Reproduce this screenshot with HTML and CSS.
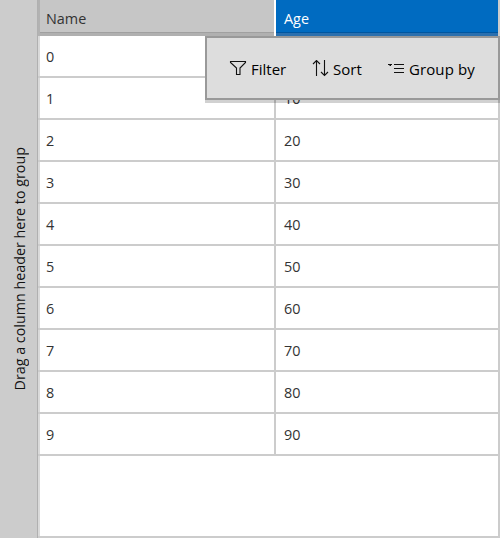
FILE: index.html
```html
<!DOCTYPE html>
<html lang="en">
<head>
<meta charset="utf-8">
<title>Data grid</title>
<link rel="stylesheet" href="styles.css">
</head>
<body>
<div class="app">
  <aside class="group-panel"><span>Drag a column header here to group</span></aside>
  <main class="grid">
    <div class="header"><div class="head">Name</div><div class="head selected">Age</div></div>
    <div class="row"><div class="cell">0</div><div class="cell"></div></div>
    <div class="row"><div class="cell">1</div><div class="cell">10</div></div>
    <div class="row"><div class="cell">2</div><div class="cell">20</div></div>
    <div class="row"><div class="cell">3</div><div class="cell">30</div></div>
    <div class="row"><div class="cell">4</div><div class="cell">40</div></div>
    <div class="row"><div class="cell">5</div><div class="cell">50</div></div>
    <div class="row"><div class="cell">6</div><div class="cell">60</div></div>
    <div class="row"><div class="cell">7</div><div class="cell">70</div></div>
    <div class="row"><div class="cell">8</div><div class="cell">80</div></div>
    <div class="row"><div class="cell">9</div><div class="cell">90</div></div>
    <div class="empty"></div>
  </main>
  <div class="flyout">
    <div class="action filter">
      <svg width="18" height="18" viewBox="0 0 18 18"><path d="M1.500 1.500h15v1l-5.500 5.500v6.500H7.500V8L1.500 2.500z"/></svg><span>Filter</span>
    </div>
    <div class="action sort">
      <svg width="18" height="18" viewBox="0 0 18 18"><path d="M5.500 16V.5M2 4L5.500.5L9 4M13.500 0v15.500M10 12l3.500 3.500L17 12"/></svg><span>Sort</span>
    </div>
    <div class="action group">
      <svg width="18" height="18" viewBox="0 0 18 18"><path d="M7 4.500h10M7 8.500h10M7 12.500h10"/><path class="solid" d="M1 4h4v1H4v1H2.500V5H1z"/></svg><span>Group by</span>
    </div>
  </div>
</div>
</body>
</html>
```
FILE: styles.css
```css
* { box-sizing: border-box; }
body { margin: 0; font: 14.4px/20px "Open Sans", "Noto Sans", sans-serif; color: #333; }
.app { position: relative; display: flex; width: 500px; height: 538px; overflow: hidden; background: #fff; }
.group-panel { flex: 0 0 38px; display: flex; align-items: center; justify-content: center; background: #ccc; border-right: 1px solid #b0b0b0; color: #111; }
.group-panel span { writing-mode: vertical-rl; transform: rotate(180deg); white-space: nowrap; font-size: 14.3px; margin-left: 3px; }
.grid { flex: 0 0 462px; display: flex; flex-direction: column; border-right: 2px solid #ccc; border-bottom: 2px solid #ccc; }
.header { display: flex; flex: 0 0 36px; background: #c6c6c6; }
.head { flex: 0 0 238px; padding: 9px 0 0 8px; border-right: 2px solid #fff; background: linear-gradient(#c6c6c6 32px, #a0a0a0 32px 33px, #b0b0b0 33px); }
.head:first-child { border-left: 2px solid #b2b2b2; padding-left: 6px; }
.head.selected { flex: 1; border: 0; color: #fff; background: linear-gradient(#006bc1 32px, #0056a0 32px 33px, #2b70af 33px); }
.row { display: flex; flex: 0 0 42px; border-bottom: 2px solid #ccc; }
.cell { flex: 0 0 238px; padding: 11px 0 0 8px; border-right: 2px solid #ccc; }
.cell:first-child { border-left: 2px solid #dadada; padding-left: 6px; }
.cell:last-child { flex: 1; border-right: 0; }
.empty { flex: 1; border-left: 2px solid #dadada; }
.flyout { position: absolute; left: 205px; top: 36px; width: 295px; height: 64px; display: flex; align-items: center; padding: 1px 0 0 22px; background: #ddd; border: 2px solid #999; box-shadow: 0 3px 0 rgba(0, 0, 0, .18); color: #000; font-size: 15px; }
.action { display: flex; align-items: center; gap: 4px; white-space: nowrap; }
.action span { padding-top: 1px; }
.filter { width: 82px; }
.sort { width: 76px; }
.group span { letter-spacing: .1px; }
.action svg { flex: none; fill: none; stroke: #111; stroke-width: 1.1; }
.action .solid { fill: #111; stroke: none; }
```
